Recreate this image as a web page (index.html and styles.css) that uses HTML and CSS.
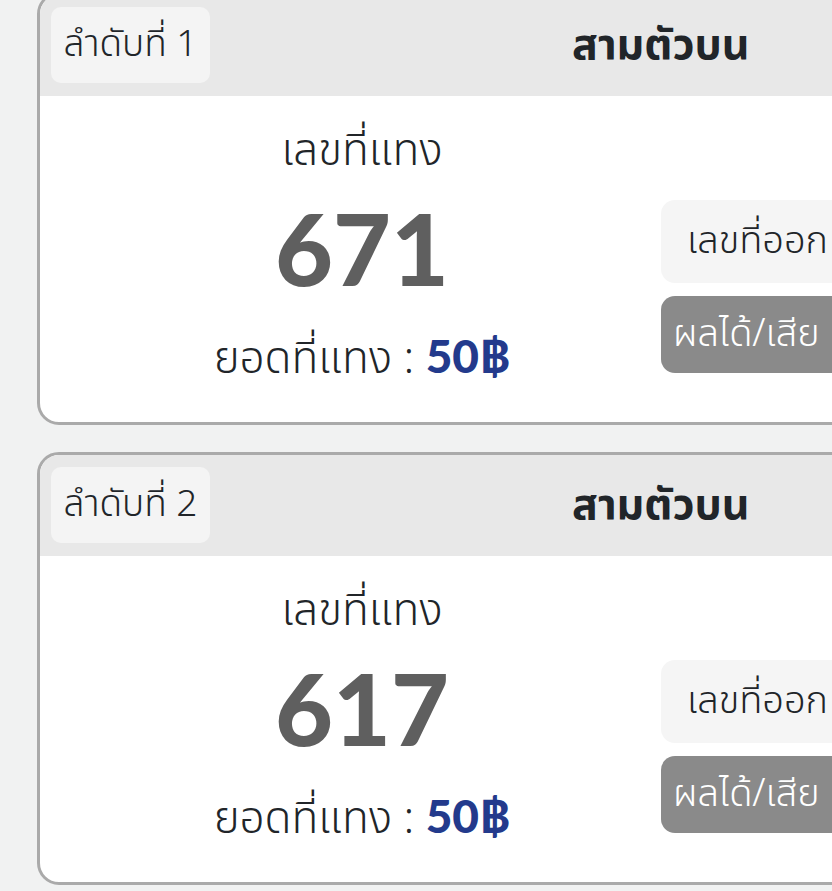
FILE: index.html
```html
<!DOCTYPE html>
<html lang="th">

<head>
    <meta charset="UTF-8">
    <title>รายการแทง</title>
    <link rel="stylesheet" href="styles.css">
</head>

<body>
    <div class="bet-list">

        <div class="bet-card">
            <div class="bet-head">
                <div class="bet-order">ลำดับที่ 1</div>
                <div class="bet-type">สามตัวบน</div>
            </div>
            <div class="bet-body">
                <div class="bet-main">
                    <div class="bet-label">เลขที่แทง</div>
                    <div class="bet-number">671</div>
                    <div class="bet-amount">ยอดที่แทง : <b>50฿</b></div>
                </div>
                <div class="bet-side">
                    <div class="side-box result">เลขที่ออก</div>
                    <div class="side-box profit">ผลได้/เสีย</div>
                </div>
            </div>
        </div>

        <div class="bet-card">
            <div class="bet-head">
                <div class="bet-order">ลำดับที่ 2</div>
                <div class="bet-type">สามตัวบน</div>
            </div>
            <div class="bet-body">
                <div class="bet-main">
                    <div class="bet-label">เลขที่แทง</div>
                    <div class="bet-number">617</div>
                    <div class="bet-amount">ยอดที่แทง : <b>50฿</b></div>
                </div>
                <div class="bet-side">
                    <div class="side-box result">เลขที่ออก</div>
                    <div class="side-box profit">ผลได้/เสีย</div>
                </div>
            </div>
        </div>

    </div>
</body>

</html>
```

FILE: styles.css
```css
body {
    font-family: "Noto Sans Thai", "Noto Sans", sans-serif;
    font-weight: 350;
    background-color: #f1f2f2;
    color: #212529;
    margin: 0;
    overflow: hidden;
}

.bet-list {
    padding-left: 37px;
    margin-top: -8px;
}

.bet-card {
    width: 1240px;
    background-color: #fff;
    border: 3px solid #aaa;
    border-radius: 22px;
    overflow: hidden;
    margin-bottom: 27px;
}

.bet-head {
    display: flex;
    align-items: center;
    background-color: #e8e8e8;
    padding: 12px 11px 13px;
}

.bet-order {
    background-color: #f4f4f4;
    border-radius: 10px;
    width: 159px;
    height: 76px;
    display: flex;
    align-items: center;
    justify-content: center;
    font-size: 37px;
}

.bet-type {
    margin-left: 362px;
    font-size: 43px;
    font-weight: bold;
}

.bet-body {
    display: flex;
    height: 326px;
}

.bet-main {
    width: 560px;
    margin-left: 42px;
    text-align: center;
}

.bet-label {
    font-size: 44px;
    line-height: 52px;
    margin-top: 30px;
}

.bet-number {
    font-family: Lato, sans-serif;
    font-size: 100px;
    font-weight: 900;
    color: #5f5f5f;
    line-height: 98px;
    margin-top: 20px;
}

.bet-amount {
    font-size: 44px;
    line-height: 52px;
    margin-top: 34px;
}

.bet-amount b {
    font-family: Lato, sans-serif;
    font-size: 46px;
    font-weight: 900;
    color: #233a8c;
}

.bet-side {
    margin-left: 19px;
    padding-top: 104px;
}

.side-box {
    border-radius: 14px;
    display: flex;
    align-items: center;
    font-size: 38px;
    width: 300px;
}

.result {
    background-color: #f5f5f5;
    height: 83px;
    padding-left: 26px;
}

.profit {
    background-color: #8a8a8a;
    color: #fff;
    height: 77px;
    padding-left: 12px;
    margin-top: 13px;
}
```
